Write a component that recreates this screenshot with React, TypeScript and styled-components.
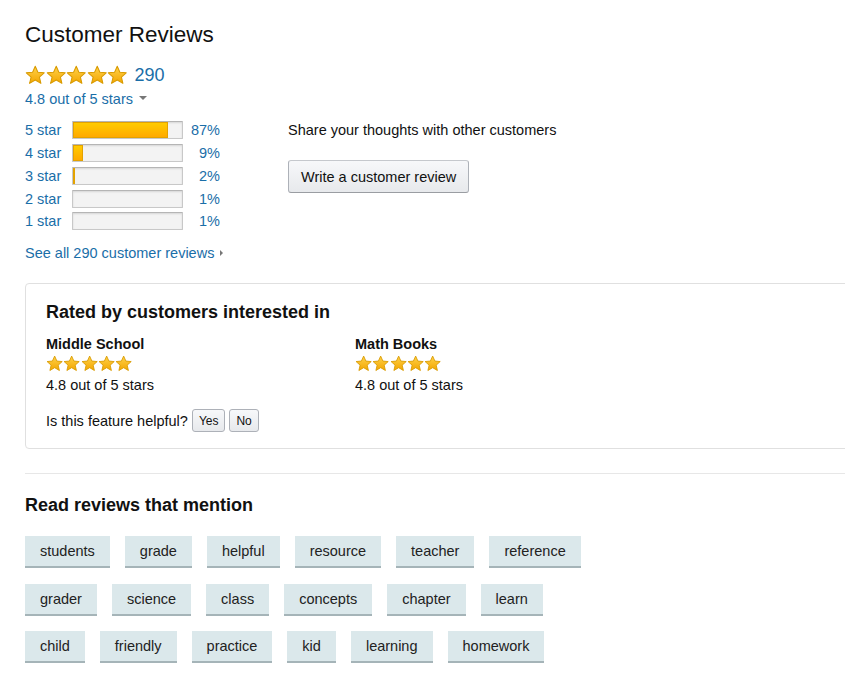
import React from "react";
import styled, { createGlobalStyle } from "styled-components";

const GlobalStyle = createGlobalStyle`
  body {
    margin: 0;
    background: #fff;
    font-family: "Liberation Sans", Arial, sans-serif;
    color: #111;
  }
`;

const blue = "#1a6ea8";

const Page = styled.div`
  padding: 22px 0 0 25px;
  overflow: hidden;
`;

const Title = styled.h2`
  margin: 0;
  font-size: 22.5px;
  font-weight: 400;
  line-height: 26px;
`;

const Summary = styled.div`
  display: flex;
  align-items: center;
  gap: 7px;
  margin-top: 17px;
`;

const Count = styled.span`
  font-size: 18px;
  color: ${blue};
`;

const LinkText = styled.div`
  font-size: 14.5px;
  color: ${blue};
  line-height: 18px;
`;

const RatingLink = styled(LinkText)`
  margin-top: 4px;
`;

const Caret = styled.span`
  display: inline-block;
  margin-left: 6px;
  vertical-align: middle;
  border-left: 4px solid transparent;
  border-right: 4px solid transparent;
  border-top: 4px solid #777;
  transform: translateY(-2px);
`;

const Arrow = styled.span`
  display: inline-block;
  margin-left: 6px;
  vertical-align: middle;
  border-top: 3px solid transparent;
  border-bottom: 3px solid transparent;
  border-left: 3px solid #777;
  transform: translateY(-1px);
`;

const Overview = styled.div`
  display: flex;
  margin-top: 11px;
`;

const Histogram = styled.div`
  width: 263px;
`;

const HistRow = styled.div`
  display: flex;
  align-items: center;
  height: 22.75px;
  font-size: 14.5px;
  color: ${blue};
`;

const HistLabel = styled.span`
  width: 47px;
`;

const Bar = styled.div`
  width: 109px;
  height: 16px;
  background: #f3f3f3;
  border: 1px solid #c8c8c8;
  border-top-color: #b5b5b5;
  border-radius: 1px;
  box-shadow: inset 0 1px 2px rgba(0, 0, 0, 0.12);
`;

const Fill = styled.div`
  height: 100%;
  background: linear-gradient(#ffce00, #ffa700);
  box-shadow: inset 0 0 0 1px #e3a200;
`;

const Pct = styled.span`
  width: 37px;
  text-align: right;
`;

const SeeAll = styled(LinkText)`
  margin-top: 11px;
`;

const WriteBox = styled.div`
  padding-top: 2px;
`;

const Plain = styled.div`
  font-size: 14.5px;
  line-height: 18px;
`;

const Button = styled.button`
  margin-top: 21px;
  height: 33px;
  padding: 0 12px;
  font-family: inherit;
  font-size: 14.5px;
  color: #111;
  background: linear-gradient(#f7f8fa, #e7e9ec);
  border: 1px solid #adb1b8;
  border-top-color: #c5c8cd;
  border-bottom-color: #9a9da2;
  border-radius: 3px;
`;

const RatedCard = styled.section`
  margin-top: 21px;
  width: 900px;
  border: 1px solid #e0e0e0;
  border-radius: 4px;
  padding: 17px 20px 16px;
  box-sizing: border-box;
`;

const CardTitle = styled.h3`
  margin: 0;
  font-size: 18px;
  font-weight: 700;
  line-height: 22px;
`;

const Interests = styled.div`
  display: grid;
  grid-template-columns: 309px 300px;
  margin-top: 13px;
`;

const Interest = styled.div`
  display: flex;
  flex-direction: column;
  gap: 2px;
`;

const Bold = styled.div`
  font-size: 14.5px;
  font-weight: 700;
  line-height: 17px;
`;

const InterestScore = styled(Plain)`
  margin-top: 2px;
`;

const Helpful = styled.div`
  display: flex;
  align-items: center;
  gap: 4px;
  margin-top: 15px;
  font-size: 14.5px;
`;

const SmallButton = styled.button`
  height: 23px;
  padding: 0 6px;
  font-family: inherit;
  font-size: 12px;
  color: #111;
  background: linear-gradient(#f7f8fa, #e7e9ec);
  border: 1px solid #adb1b8;
  border-radius: 3px;
`;

const Divider = styled.hr`
  margin: 24px 0 0;
  border: 0;
  border-top: 1px solid #e7e7e7;
`;

const MentionTitle = styled(CardTitle)`
  margin-top: 20px;
`;

const Tags = styled.div`
  display: flex;
  flex-direction: column;
  gap: 15.5px;
  margin-top: 20px;
`;

const TagRow = styled.div`
  display: flex;
  gap: 15px;
`;

const Tag = styled.span`
  display: inline-flex;
  align-items: center;
  height: 30px;
  padding: 0 15px;
  font-size: 14.5px;
  color: #222;
  background: #dbe8eb;
  border-bottom: 2px solid #a5b4b8;
`;

const Star = ({ size }: { size: number }) => (
  <svg width={size} height={size} viewBox="0 0 24 24">
    <defs>
      <linearGradient id="sg" x1="0" y1="0" x2="0" y2="1">
        <stop offset="0" stopColor="#ffd24a" />
        <stop offset="1" stopColor="#f3a600" />
      </linearGradient>
    </defs>
    <path
      d="M12 1.5l3.1 6.9 7.4.7-5.6 5 1.7 7.4L12 17.6l-6.6 3.9 1.7-7.4-5.6-5 7.4-.7z"
      fill="url(#sg)"
      stroke="#d89a00"
      strokeWidth="1.2"
      strokeLinejoin="round"
    />
  </svg>
);

const StarsWrap = styled.span`
  display: inline-flex;
  line-height: 0;
`;

const Stars = ({ size }: { size: number }) => (
  <StarsWrap>
    {[0, 1, 2, 3, 4].map((i) => (
      <Star key={i} size={size} />
    ))}
  </StarsWrap>
);

const histogram = [
  { label: "5 star", pct: 87 },
  { label: "4 star", pct: 9 },
  { label: "3 star", pct: 2 },
  { label: "2 star", pct: 1 },
  { label: "1 star", pct: 1 },
];

const tagRows = [
  ["students", "grade", "helpful", "resource", "teacher", "reference"],
  ["grader", "science", "class", "concepts", "chapter", "learn"],
  ["child", "friendly", "practice", "kid", "learning", "homework"],
];

const App = () => {
  return (
    <Page>
      <GlobalStyle />
      <Title>Customer Reviews</Title>
      <Summary>
        <Stars size={20.5} />
        <Count>290</Count>
      </Summary>
      <RatingLink>
        4.8 out of 5 stars
        <Caret />
      </RatingLink>

      <Overview>
        <Histogram>
          {histogram.map((r) => (
            <HistRow key={r.label}>
              <HistLabel>{r.label}</HistLabel>
              <Bar>
                <Fill style={{ width: `${r.pct === 1 ? 0 : r.pct}%` }} />
              </Bar>
              <Pct>{r.pct}%</Pct>
            </HistRow>
          ))}
          <SeeAll>
            See all 290 customer reviews
            <Arrow />
          </SeeAll>
        </Histogram>
        <WriteBox>
          <Plain>Share your thoughts with other customers</Plain>
          <Button>Write a customer review</Button>
        </WriteBox>
      </Overview>

      <RatedCard>
        <CardTitle>Rated by customers interested in</CardTitle>
        <Interests>
          {["Middle School", "Math Books"].map((name) => (
            <Interest key={name}>
              <Bold>{name}</Bold>
              <Stars size={17.3} />
              <InterestScore>4.8 out of 5 stars</InterestScore>
            </Interest>
          ))}
        </Interests>
        <Helpful>
          Is this feature helpful?
          <SmallButton>Yes</SmallButton>
          <SmallButton>No</SmallButton>
        </Helpful>
      </RatedCard>

      <Divider />
      <MentionTitle>Read reviews that mention</MentionTitle>
      <Tags>
        {tagRows.map((row, i) => (
          <TagRow key={i}>
            {row.map((t) => (
              <Tag key={t}>{t}</Tag>
            ))}
          </TagRow>
        ))}
      </Tags>
    </Page>
  );
};

export default App;
